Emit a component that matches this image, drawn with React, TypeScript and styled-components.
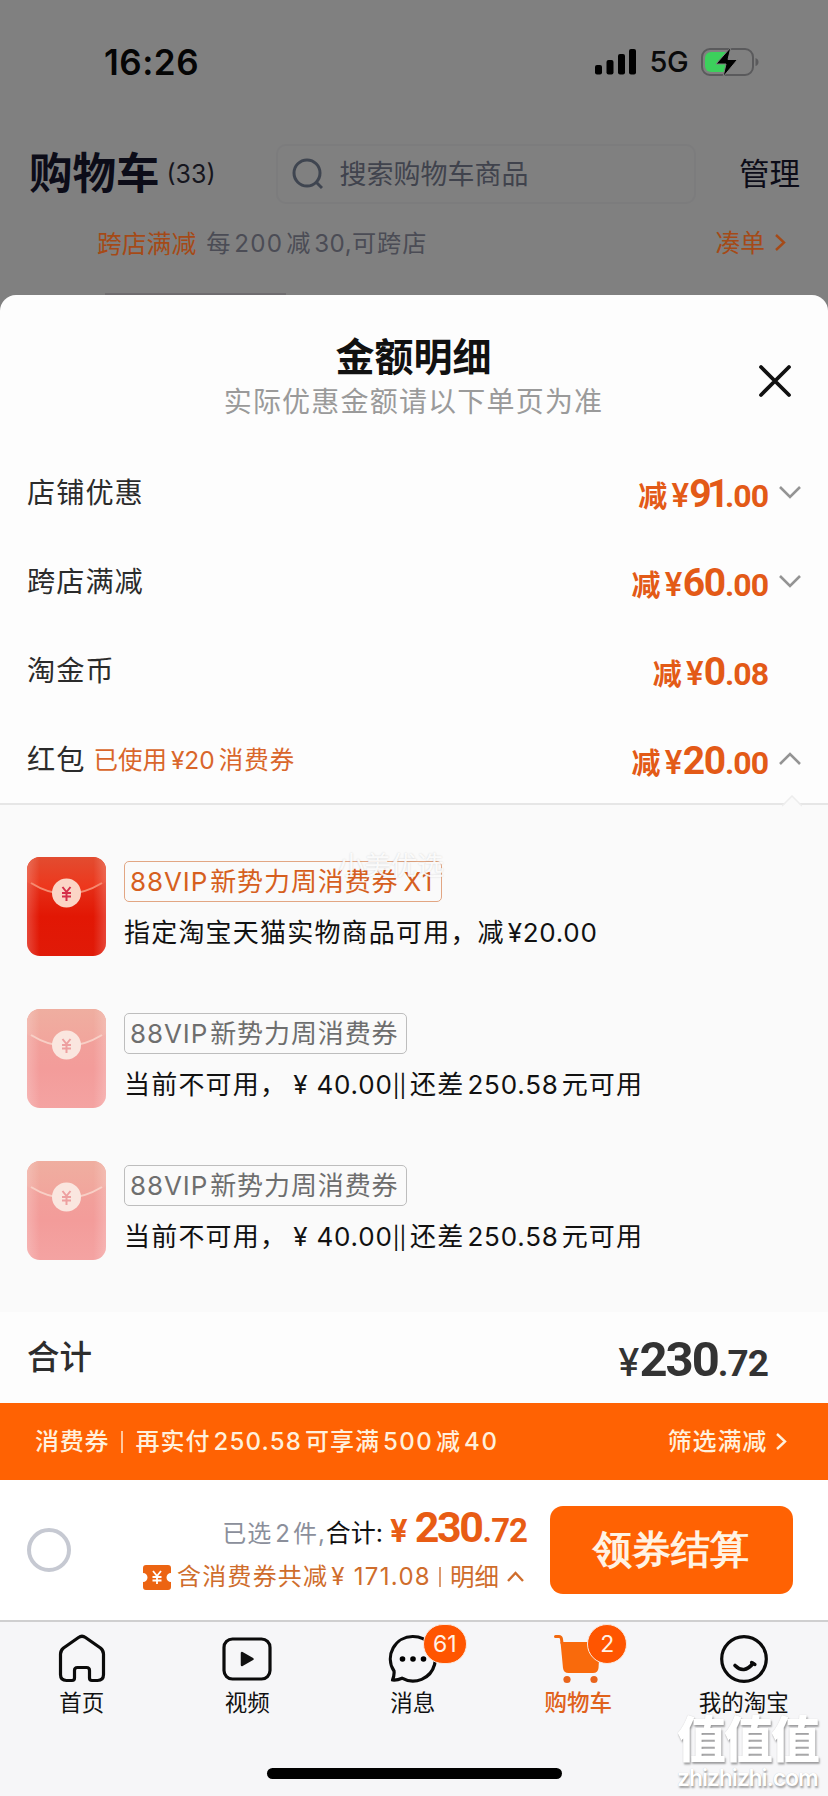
import React from 'react';
import styled, { createGlobalStyle } from 'styled-components';

const GlobalStyle = createGlobalStyle`
  * { box-sizing: border-box; }
  body {
    margin: 0;
    background: #808080;
    font-family: Inter, "Noto Sans CJK SC", sans-serif;
    -webkit-font-smoothing: antialiased;
  }
  svg { display: block; flex: none; }
`;

const Screen = styled.div`
  width: 828px;
  height: 1796px;
  display: flex;
  flex-direction: column;
  overflow: hidden;
  position: relative;
  background: #808080;
`;

const Text = styled.span<{ $size: number; $color?: string; $weight?: number; $track?: number }>`
  font-size: ${p => p.$size}px;
  font-weight: ${p => p.$weight ?? 400};
  color: ${p => p.$color ?? '#111'};
  letter-spacing: ${p => p.$track ?? 0}px;
  line-height: 1;
  white-space: nowrap;
`;

const Num = styled.span<{ $l?: number; $r?: number; $track?: number }>`
  margin-left: ${p => p.$l ?? 3}px;
  margin-right: ${p => p.$r ?? 3}px;
  letter-spacing: ${p => p.$track ?? 0}px;
`;

const StatusBar = styled.header`
  height: 124px;
  padding: 0 69px 0 104px;
  display: flex;
  align-items: center;
  justify-content: space-between;
`;

const StatusIcons = styled.div`
  display: flex;
  align-items: center;
  gap: 13px;
  padding-bottom: 1px;
`;

const CartHeader = styled.div`
  height: 100px;
  padding: 0 28px 0 29px;
  display: flex;
  align-items: center;
`;

const CartCount = styled.div`
  width: 108px;
  padding-left: 7px;
`;

const SearchBox = styled.div`
  width: 420px;
  height: 60px;
  margin: 0 auto 0 8px;
  padding-left: 14px;
  display: flex;
  align-items: center;
  gap: 17px;
  border: 2px solid #7c7c7d;
  border-radius: 10px;
`;

const PromoRow = styled.div`
  height: 41px;
  padding: 0 43px 0 97px;
  display: flex;
  align-items: center;
  justify-content: space-between;
`;

const PromoText = styled.div<{ $lift?: number }>`
  display: flex;
  align-items: center;
  gap: 10px;
  padding-bottom: ${p => p.$lift ?? 0}px;
`;

const ScrollShade = styled.div`
  margin: 28px 0 0 105px;
  width: 181px;
  height: 2px;
  background: #6f6d70;
`;

const Sheet = styled.section`
  height: 1108px;
  flex: none;
  background: #fdfdfd;
  border-radius: 16px 16px 0 0;
  display: flex;
  flex-direction: column;
`;

const SheetHead = styled.div`
  height: 153px;
  padding: 42px 1px 0 0;
  display: flex;
  flex-direction: column;
  align-items: center;
  gap: 12px;
  position: relative;
`;

const CloseButton = styled.button`
  position: absolute;
  right: 36px;
  top: 69px;
  padding: 0;
  border: 0;
  background: none;
`;

const DetailRow = styled.div`
  height: 89px;
  flex: none;
  padding: 1px 27px 0;
  display: flex;
  align-items: center;
`;

const RowAmount = styled.div`
  margin-left: auto;
  width: 230px;
  padding-top: 3px;
  display: flex;
  align-items: baseline;
  justify-content: flex-end;
`;

const RowArrow = styled.div`
  width: 33px;
  padding-bottom: 3px;
  display: flex;
  justify-content: flex-end;
`;

const Digits = styled.span<{ $size: number; $color: string; $track: number }>`
  font-family: Roboto, "Liberation Sans", sans-serif;
  font-weight: 700;
  font-size: ${p => p.$size}px;
  line-height: 1;
  letter-spacing: ${p => p.$track}px;
  color: ${p => p.$color};
`;

const CouponPanel = styled.div`
  height: 509px;
  margin-top: -1px;
  flex: none;
  background: #fafafa;
  border-top: 2px solid #e6e6e6;
  padding: 52px 27px 0;
  display: flex;
  flex-direction: column;
  gap: 53px;
  position: relative;
`;

const Notch = styled.svg`
  position: absolute;
  right: 26px;
  top: -10px;
`;

const Coupon = styled.div`
  height: 99px;
  display: flex;
  gap: 18px;
`;

const CouponBody = styled.div`
  display: flex;
  flex-direction: column;
  align-items: flex-start;
  padding-top: 4px;
  gap: 18px;
`;

const CouponTag = styled.div<{ $active: boolean }>`
  height: 41px;
  width: ${p => (p.$active ? 318 : 283)}px;
  padding: 1px 0 0 5px;
  border: 1.5px solid ${p => (p.$active ? '#e2a683' : '#bdbdbd')};
  border-radius: 5px;
  display: flex;
  align-items: center;
`;

const SheetTotal = styled.div`
  flex: 1;
  padding: 1px 60px 0 27px;
  display: flex;
  align-items: center;
  justify-content: space-between;
`;

const TotalAmount = styled.div`
  display: flex;
  align-items: baseline;
  padding-top: 3px;
`;

const PromoBar = styled.div`
  height: 77px;
  flex: none;
  background: #ff6203;
  padding: 0 42px 0 35px;
  display: flex;
  align-items: center;
`;

const Divider = styled.span<{ $h: number; $color: string; $m: string }>`
  width: 2px;
  height: ${p => p.$h}px;
  background: ${p => p.$color};
  margin: ${p => p.$m};
`;

const FilterLink = styled.div`
  margin-left: auto;
  display: flex;
  align-items: center;
  gap: 9px;
`;

const Checkout = styled.div`
  height: 140px;
  flex: none;
  background: #fff;
  padding: 0 35px 0 27px;
  display: flex;
  align-items: center;
`;

const Radio = styled.span`
  width: 44px;
  height: 44px;
  border: 4px solid #c6c9d2;
  border-radius: 50%;
`;

const Summary = styled.div`
  margin-left: auto;
  margin-right: 23px;
  height: 88px;
  display: flex;
  flex-direction: column;
  align-items: flex-end;
`;

const SummaryLine = styled.div`
  display: flex;
  align-items: baseline;
  height: 57px;
`;

const SavingLine = styled.div`
  display: flex;
  align-items: center;
  height: 28px;
  padding-right: 3px;
`;

const PayButton = styled.button`
  width: 243px;
  height: 88px;
  border: 0;
  padding: 0 2px 2px 0;
  border-radius: 13px;
  background: #ff6203;
`;

const TabBar = styled.nav`
  flex: 1;
  background: #f6f6f8;
  border-top: 2px solid #cfcfd0;
  display: flex;
  flex-direction: column;
  align-items: center;
`;

const Tabs = styled.div`
  height: 146px;
  align-self: flex-start;
  margin-left: -1px;
  display: flex;
`;

const Tab = styled.div`
  width: 165.5px;
  padding-top: 12px;
  display: flex;
  flex-direction: column;
  align-items: center;
  gap: 8px;
`;

const TabIcon = styled.div`
  position: relative;
  width: 50px;
  height: 50px;
`;

const Badge = styled.span<{ $w: number; $x: number }>`
  position: absolute;
  left: ${p => p.$x}px;
  top: -10px;
  width: ${p => p.$w}px;
  height: 40px;
  border-radius: 20px;
  border: 1px solid #fbe9df;
  background: #ff5500;
  color: #fff2e6;
  font-size: 23px;
  display: flex;
  align-items: center;
  justify-content: center;
`;

const HomeIndicator = styled.div`
  width: 295px;
  height: 11px;
  border-radius: 6px;
  background: #000;
`;

const ShopMark = styled.div`
  position: absolute;
  left: 338px;
  top: 850px;
  font-size: 26.5px;
  line-height: 30px;
  color: rgba(255, 255, 255, 0.9);
  text-shadow: 0 0 2px rgba(0, 0, 0, 0.16);
`;

const SiteMark = styled.div`
  position: absolute;
  left: 677px;
  top: 1713px;
  color: #fff;
  text-shadow: 1px 2px 2px rgba(0, 0, 0, 0.35), 0 0 1px rgba(0, 0, 0, 0.2);
  display: flex;
  flex-direction: column;
`;

const SiteName = styled.span`
  font-size: 49px;
  font-weight: 900;
  line-height: 53px;
  letter-spacing: -2px;
`;

const SiteUrl = styled.span`
  font-size: 23px;
  font-weight: 600;
  line-height: 24px;
  letter-spacing: -1.1px;
`;

type Dir = 'up' | 'down' | 'right';

function Chevron({ dir, w, h, color, stroke = 2.4 }: { dir: Dir; w: number; h: number; color: string; stroke?: number }) {
  const pts =
    dir === 'down' ? `1,1 ${w / 2},${h - 1} ${w - 1},1`
    : dir === 'up' ? `1,${h - 1} ${w / 2},1 ${w - 1},${h - 1}`
    : `1,1 ${w - 1},${h / 2} 1,${h - 1}`;
  return (
    <svg width={w} height={h} viewBox={`0 0 ${w} ${h}`} overflow="visible">
      <polyline points={pts} fill="none" stroke={color} strokeWidth={stroke} />
    </svg>
  );
}

function Envelope({ id, faded }: { id: string; faded?: boolean }) {
  return (
    <svg width="79" height="99" viewBox="0 0 79 99">
      <defs>
        <linearGradient id={`${id}b`} x1="0" y1="0" x2="0" y2="1">
          <stop offset="0" stopColor={faded ? '#f0a59b' : '#e8452a'} />
          <stop offset="0.6" stopColor={faded ? '#f39c9a' : '#e21704'} />
          <stop offset="1" stopColor={faded ? '#f4a3a2' : '#e01a08'} />
        </linearGradient>
        <linearGradient id={`${id}f`} x1="0" y1="0" x2="0" y2="1">
          <stop offset="0" stopColor={faded ? '#efaea0' : '#e24c30'} />
          <stop offset="1" stopColor={faded ? '#f2a49c' : '#f03218'} />
        </linearGradient>
        <linearGradient id={`${id}s`} x1="0" y1="0" x2="1" y2="0">
          <stop offset="0" stopColor="#fff" stopOpacity="0.2" />
          <stop offset="0.16" stopColor="#fff" stopOpacity="0" />
          <stop offset="0.84" stopColor="#fff" stopOpacity="0" />
          <stop offset="1" stopColor="#fff" stopOpacity="0.2" />
        </linearGradient>
      </defs>
      <rect width="79" height="99" rx="13" fill={`url(#${id}b)`} />
      <path d="M13 0H66A13 13 0 0 1 79 13V25Q40 50 0 25V13A13 13 0 0 1 13 0Z" fill={`url(#${id}f)`} />
      <rect width="79" height="99" rx="13" fill={`url(#${id}s)`} />
      <path d="M4 26Q39 48 75 26" fill="none" stroke={faded ? '#f8cfc6' : '#f58a70'} strokeWidth="2" />
      <circle cx="39.500" cy="36" r="14.500" fill={faded ? '#fae6df' : '#fbd5c6'} />
      <path
        d="M35.500 30L39.500 35L43.500 30M39.500 35V44M35 36H44M35 39.500H44"
        fill="none"
        stroke={faded ? '#eda0a0' : '#d4304a'}
        strokeWidth="2"
      />
    </svg>
  );
}

function Amount({ whole, cents }: { whole: string; cents: string }) {
  const orange = '#e35a17';
  return (
    <RowAmount>
      <Text $size={29} $weight={600} $color={orange}>减</Text>
      <Text $size={32} $weight={600} $color={orange}>
        <Num $l={4} $r={0}>¥</Num>
      </Text>
      <Digits $size={39} $color={orange} $track={whole === '91' ? -4.5 : -1.2}>{whole}</Digits>
      <Digits $size={32} $color={orange} $track={-1}>.{cents}</Digits>
    </RowAmount>
  );
}

const rows: { label: string; note?: boolean; whole: string; cents: string; arrow?: Dir }[] = [
  { label: '店铺优惠', whole: '91', cents: '00', arrow: 'down' },
  { label: '跨店满减', whole: '60', cents: '00', arrow: 'down' },
  { label: '淘金币', whole: '0', cents: '08' },
  { label: '红包', note: true, whole: '20', cents: '00', arrow: 'up' },
];

export default function App() {
  return (
    <>
      <GlobalStyle />
      <Screen>
        <StatusBar>
          <Text $size={35} $weight={600} $color="#050505" $track={0.5}>16:26</Text>
          <StatusIcons>
            <svg width="42" height="27" viewBox="0 0 42 27">
              <rect x="0" y="17" width="7" height="9.500" rx="2" />
              <rect x="11.500" y="12" width="7" height="14.500" rx="2" />
              <rect x="23" y="6" width="7" height="20.500" rx="2" />
              <rect x="34" y="1" width="7" height="25.500" rx="2" />
            </svg>
            <Text $size={29} $weight={500} $color="#0a0a0a" $track={-0.6}>5G</Text>
            <svg width="58" height="30" viewBox="0 0 58 30">
              <rect x="1" y="2" width="51" height="26" rx="8" fill="none" stroke="#5a5a5c" strokeWidth="2" />
              <path d="M10 5H26V25H10A6 6 0 0 1 4 19V11A6 6 0 0 1 10 5Z" fill="#3cd05c" />
              <path d="M54.500 11Q57.500 12 57.500 15T54.500 19Z" fill="#5a5a5c" />
              <path d="M30 0L15 17H25L22 30L36.500 12.500H27Z" fill="#000" stroke="#808080" strokeWidth="1" />
            </svg>
          </StatusIcons>
        </StatusBar>

        <CartHeader>
          <Text $size={43.5} $weight={600} $color="#0c0c18">购物车</Text>
          <CartCount>
            <Text $size={25} $color="#16161e">(33)</Text>
          </CartCount>
          <SearchBox>
            <svg width="31" height="32" viewBox="0 0 31 32" fill="none" stroke="#3f4550" strokeWidth="3">
              <circle cx="15" cy="15" r="13" />
              <path d="M24 24L30 30" />
            </svg>
            <Text $size={27} $color="#40434d">搜索购物车商品</Text>
          </SearchBox>
          <Text $size={30.5} $weight={400} $color="#0c0c18">管理</Text>
        </CartHeader>

        <PromoRow>
          <PromoText>
            <Text $size={24.8} $color="#a54a17">跨店满减</Text>
            <Text $size={24.2} $color="#4b4c55" $track={0.9}>
              每<Num $track={1.2}>200</Num>减<Num $track={0.4} $r={0}>30,</Num>可跨店
            </Text>
          </PromoText>
          <PromoText $lift={3}>
            <Text $size={24.800} $color="#a54a17">凑单</Text>
            <Chevron dir="right" w={10} h={17} color="#a54a17" />
          </PromoText>
        </PromoRow>
        <ScrollShade />

        <Sheet>
          <SheetHead>
            <Text $size={39} $weight={600}>金额明细</Text>
            <Text $size={28} $color="#9a9a9a" $track={1.2}>实际优惠金额请以下单页为准</Text>
            <CloseButton aria-label="关闭">
              <svg width="34" height="34" viewBox="0 0 34 34" stroke="#111" strokeWidth="3.800" strokeLinecap="round">
                <path d="M3 3L31 31M31 3L3 31" />
              </svg>
            </CloseButton>
          </SheetHead>

          {rows.map(r => (
            <DetailRow key={r.label}>
              <Text $size={28.2} $color="#2b2b2b" $track={1}>{r.label}</Text>
              {r.note && (
                <Text $size={24.5} $color="#d9662b" $track={1}>
                  <Num $l={8} $r={0}>已使用</Num><Num $l={4} $r={4}>¥20</Num>消费券
                </Text>
              )}
              <Amount whole={r.whole} cents={r.cents} />
              <RowArrow>{r.arrow && <Chevron dir={r.arrow} w={22} h={12} color="#949494" stroke={2.6} />}</RowArrow>
            </DetailRow>
          ))}

          <CouponPanel>
            <Notch width="20" height="12" viewBox="0 0 20 12">
              <path d="M0 12L10 1L20 12Z" fill="#fafafa" />
              <path d="M0 11L10 1L20 11" fill="none" stroke="#ededed" strokeWidth="1.500" />
            </Notch>
            <Coupon>
              <Envelope id="e1" />
              <CouponBody>
                <CouponTag $active>
                  <Text $size={26} $color="#d65f20" $track={0.9}>
                    88VIP<Num $l={2} $r={0} />新势力周消费券<Num $l={5} $r={0} $track={0.4}>X1</Num>
                  </Text>
                </CouponTag>
                <Text $size={26} $track={1.2}>
                  指定淘宝天猫实物商品可用，减<Num $track={0.7}>¥20.00</Num>
                </Text>
              </CouponBody>
            </Coupon>
            {['e2', 'e3'].map(id => (
              <Coupon key={id}>
                <Envelope id={id} faded />
                <CouponBody>
                  <CouponTag $active={false}>
                    <Text $size={26} $color="#6e6e6e" $track={0.9}>
                      88VIP<Num $l={2} $r={0} />新势力周消费券
                    </Text>
                  </CouponTag>
                  <Text $size={26} $track={1.2}>
                    当前不可用，<Num $l={6} $r={0} $track={0.8}>¥ 40.00</Num>
                    <Text $size={22} $track={-0.6}>||</Text><Num $l={4} $r={0} />还差<Num $track={0.8}>250.58</Num>元可用
                  </Text>
                </CouponBody>
              </Coupon>
            ))}
          </CouponPanel>

          <SheetTotal>
            <Text $size={32.5} $weight={500} $color="#2d2d2d">合计</Text>
            <TotalAmount>
              <Text $size={38} $weight={500} $color="#333">¥</Text>
              <Digits $size={49} $color="#333" $track={-2}>230</Digits>
              <Digits $size={37} $color="#333" $track={-1}>.72</Digits>
            </TotalAmount>
          </SheetTotal>
        </Sheet>

        <PromoBar>
          <Text $size={24} $weight={500} $color="#fff0dc" $track={0.8}>消费券</Text>
          <Divider $h={22} $color="#ffc79c" $m="0 12px 0 12px" />
          <Text $size={24} $weight={500} $color="#fff0dc" $track={1}>
            再实付<Num $track={1.2}>250.58</Num>可享满<Num $track={1.4}>500</Num>减<Num $track={1.6}>40</Num>
          </Text>
          <FilterLink>
            <Text $size={24} $weight={500} $color="#fff0dc" $track={0.8}>筛选满减</Text>
            <Chevron dir="right" w={10} h={17} color="#fff0dc" />
          </FilterLink>
        </PromoBar>

        <Checkout>
          <Radio />
          <Summary>
            <SummaryLine>
              <Text $size={24} $color="#8b8f9b" $track={1}>已选<Num>2</Num>件,</Text>
              <Text $size={25} $color="#111">合计:</Text>
              <Text $size={31} $weight={700} $color="#e85c14"><Num $l={7} $r={7}>¥</Num></Text>
              <Digits $size={43} $color="#e85c14" $track={-2.4}>230</Digits>
              <Num $l={1} $r={0} />
              <Digits $size={33} $color="#e85c14" $track={-1}>.72</Digits>
            </SummaryLine>
            <SavingLine>
              <svg width="28" height="25" viewBox="0 0 28 25">
                <path d="M3 0H25A3 3 0 0 1 28 3V8A4.500 4.500 0 0 0 28 17V22A3 3 0 0 1 25 25H3A3 3 0 0 1 0 22V17A4.500 4.500 0 0 0 0 8V3A3 3 0 0 1 3 0Z" fill="#ec6412" />
                <path d="M10 6L14 11L18 6M14 11V19M9.500 12H18.500M9.500 15.500H18.500" fill="none" stroke="#fff" strokeWidth="1.800" />
              </svg>
              <Text $size={24} $color="#cf6d2c" $track={1.2}>
                <Num $l={6} $r={0} />含消费券共减<Num $l={3} $r={0} $track={1.3}>¥ 171.08</Num>
              </Text>
              <Divider $h={20} $color="#dd9a70" $m="0 9px 0 8px" />
              <Text $size={24.5} $color="#cf6d2c">明细</Text>
              <Num $l={8} $r={0}><Chevron dir="up" w={17} h={10} color="#cf6d2c" /></Num>
            </SavingLine>
          </Summary>
          <PayButton>
            <Text $size={39} $weight={600} $color="#fff3e4">领券结算</Text>
          </PayButton>
        </Checkout>

        <TabBar>
          <Tabs>
            <Tab>
              <TabIcon>
                <svg width="50" height="50" viewBox="0 0 50 50" fill="none" stroke="#0b0b0b" strokeWidth="3.200" strokeLinejoin="round">
                  <path d="M21.500 3.500Q25 1 28.500 3.500L43.500 14Q46.500 16.500 46.500 20V40.500Q46.500 46.500 40.500 46.500H35Q32.500 46.500 32.500 44V36.500Q32.500 33.500 29.500 33.500H20.500Q17.500 33.500 17.500 36.500V44Q17.500 46.500 15 46.500H9.500Q3.500 46.500 3.500 40.500V20Q3.500 16.500 6.500 14Z" />
                </svg>
              </TabIcon>
              <Text $size={22.500}>首页</Text>
            </Tab>
            <Tab>
              <TabIcon>
                <svg width="50" height="50" viewBox="0 0 50 50">
                  <rect x="2" y="5" width="46" height="40" rx="8.500" fill="none" stroke="#0b0b0b" strokeWidth="3.200" />
                  <path d="M20 19V31L30.500 25Z" fill="#111" stroke="#111" strokeWidth="2.500" strokeLinejoin="round" />
                </svg>
              </TabIcon>
              <Text $size={22.500}>视频</Text>
            </Tab>
            <Tab>
              <TabIcon>
                <svg width="50" height="50" viewBox="0 0 50 50">
                  <path d="M25 2.500A22.300 22.300 0 1 1 14 44.200Q9 46.500 4.500 46Q6.500 41 6 37A22.300 22.300 0 0 1 25 2.500Z" fill="none" stroke="#0b0b0b" strokeWidth="3.200" strokeLinejoin="round" />
                  <circle cx="14.500" cy="25" r="2.800" />
                  <circle cx="25" cy="25" r="2.800" />
                  <circle cx="35.500" cy="25" r="2.800" />
                </svg>
                <Badge $w={44} $x={35}>61</Badge>
              </TabIcon>
              <Text $size={22.500}>消息</Text>
            </Tab>
            <Tab>
              <TabIcon>
                <svg width="50" height="50" viewBox="0 0 50 50">
                  <path d="M2.500 2.500H6Q8 2.500 8.500 5L9 9" fill="none" stroke="#f2690f" strokeWidth="3" strokeLinecap="round" />
                  <path d="M7.500 8H47L45.500 34Q45 39 40 39H15.500Q10.500 39 10 34Z" fill="#f96a0c" />
                  <circle cx="14" cy="45.500" r="3.600" fill="#e8641c" />
                  <circle cx="41" cy="45.500" r="3.600" fill="#e8641c" />
                </svg>
                <Badge $w={40} $x={34}>2</Badge>
              </TabIcon>
              <Text $size={22.500} $weight={500} $color="#e0621c">购物车</Text>
            </Tab>
            <Tab>
              <TabIcon>
                <svg width="50" height="50" viewBox="0 0 50 50" fill="none" stroke="#0b0b0b" strokeWidth="3.200" strokeLinecap="round">
                  <circle cx="25" cy="25" r="22.300" />
                  <path d="M16 31.500Q25 40.500 34 29.500" strokeWidth="3.600" />
                  <path d="M32.500 28.500L36 30.500" />
                </svg>
              </TabIcon>
              <Text $size={22.500}>我的淘宝</Text>
            </Tab>
          </Tabs>
          <HomeIndicator />
        </TabBar>

        <ShopMark>小美优选</ShopMark>
        <SiteMark>
          <SiteName>值值值</SiteName>
          <SiteUrl>zhizhizhi.com</SiteUrl>
        </SiteMark>
      </Screen>
    </>
  );
}
